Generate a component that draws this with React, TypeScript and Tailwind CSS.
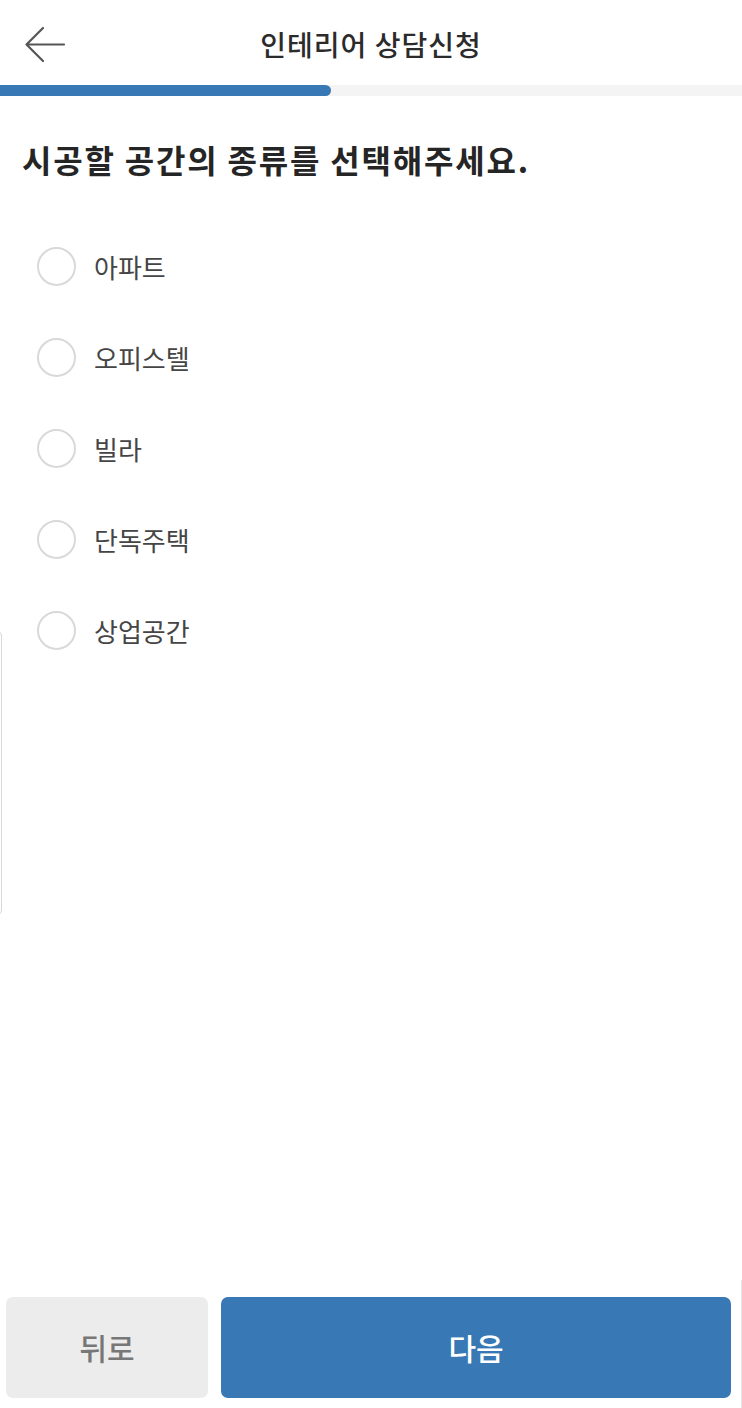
const options = ["아파트", "오피스텔", "빌라", "단독주택", "상업공간"];

const font = { fontFamily: '"Noto Sans CJK KR", "Noto Sans", sans-serif' };

export default function App() {
  return (
    <main
      className="relative flex flex-col h-[1408px] w-full bg-white overflow-hidden"
      style={font}
    >
      {/* header */}
      <header className="relative flex items-center justify-center h-[85px]">
        <button className="absolute left-[24px] top-[26px] w-[42px] h-[38px]">
          <svg width="42" height="38" viewBox="0 0 42 38" fill="none">
            <path
              d="M40 18.5H3 M19 2L2.5 18.5L19 35"
              stroke="#555"
              strokeWidth="2.2"
              strokeLinecap="round"
              strokeLinejoin="round"
            />
          </svg>
        </button>
        <h1 className="text-[28px] font-medium text-[#2b2b2b] tracking-[1px] mt-[2px]">
          인테리어 상담신청
        </h1>
      </header>

      {/* progress */}
      <div className="h-[11px] w-full bg-[#f4f4f4]">
        <div className="h-full w-[331px] bg-[#3878b4] rounded-r-full" />
      </div>

      {/* question */}
      <section className="px-[22px] pt-[43px]">
        <h2 className="text-[32px] font-bold text-[#252525] leading-[40px] tracking-[1.8px]">
          시공할 공간의 종류를 선택해주세요.
        </h2>
        <ul className="mt-[68px] flex flex-col gap-[52px] pl-[15px]">
          {options.map((opt) => (
            <li key={opt} className="flex items-center gap-[18px] h-[39px]">
              <span className="w-[39px] h-[39px] rounded-full border-2 border-[#d9d9d9]" />
              <span className="text-[26px] text-[#454545]">{opt}</span>
            </li>
          ))}
        </ul>
      </section>

      <div className="flex-1" />

      {/* bottom buttons */}
      <footer className="flex gap-[13px] px-[6px] pr-[11px] pb-[10px]">
        <button className="w-[202px] h-[101px] rounded-[7px] bg-[#ececec] text-[30px] font-medium text-[#777]">
          뒤로
        </button>
        <button className="flex-1 h-[101px] rounded-[7px] bg-[#3878b4] text-[30px] font-medium text-white">
          다음
        </button>
      </footer>

      {/* edge of an overlay panel peeking in on the left */}
      <div className="absolute left-[-40px] top-[630px] w-[42px] h-[286px] rounded-[6px] border border-[#d8d8d8] bg-white" />
      {/* thin scroll edge on the right */}
      <div className="absolute right-0 top-[1280px] w-px h-[128px] bg-[#e6e6e6]" />
    </main>
  );
}
